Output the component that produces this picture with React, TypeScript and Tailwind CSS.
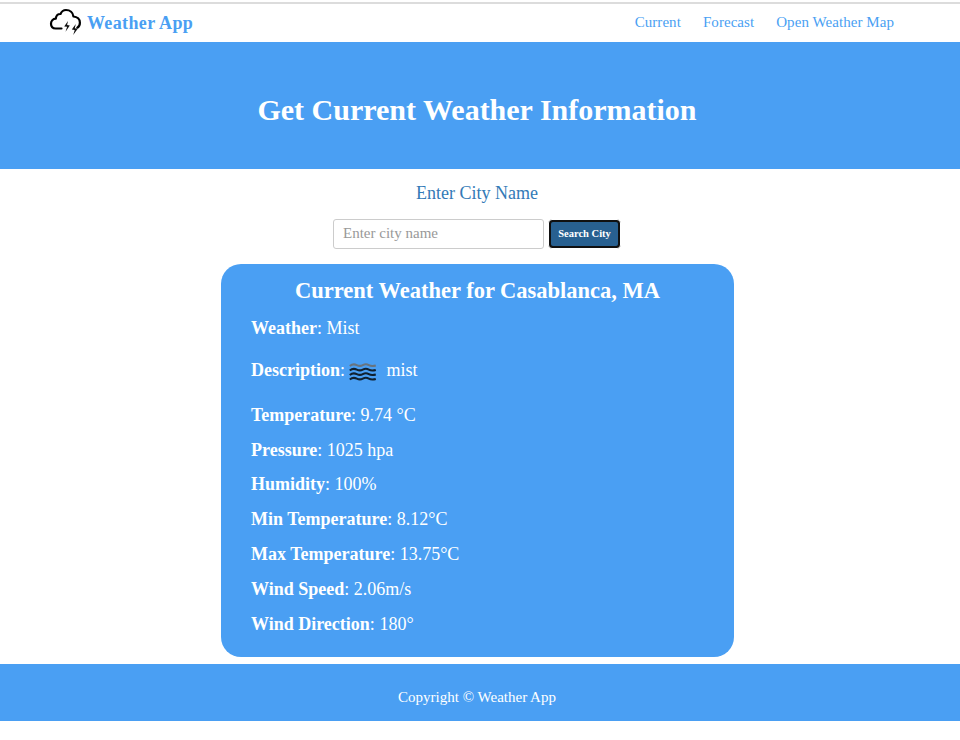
import React from "react";

const readings: [string, string][] = [
  ["Temperature", "9.74 °C"],
  ["Pressure", "1025 hpa"],
  ["Humidity", "100%"],
  ["Min Temperature", "8.12°C"],
  ["Max Temperature", "13.75°C"],
  ["Wind Speed", "2.06m/s"],
  ["Wind Direction", "180°"],
];

function StormCloud() {
  return (
    <svg className="mb-[3px] h-[28px] w-[33px] shrink-0" viewBox="0 0 33 28" fill="none">
      <path
        d="M12.500 20.500H6.800C3.800 20.500 2 18.500 2 15.800c0-2.800 2-4.900 4.800-5.100C7 7.300 9 5.800 11.500 6 12.600 3.300 14.500 2 17 2c4 0 7 2.600 7.400 6.500 3.900.2 6.500 2.700 6.500 6.200 0 2.300-.9 4-2.600 5"
        stroke="#000"
        strokeWidth="2.200"
        strokeLinecap="round"
        strokeLinejoin="round"
      />
      <path d="M19 13 15.200 18.400l2.900.4-1.600 4.900 4.300-6.100-2.700-.5zM26.800 16l-4 5.500 2.900.4-1.500 5.200 4.500-6.400-2.900-.5z" fill="#111" />
    </svg>
  );
}

function MistIcon() {
  return (
    <svg className="h-[18px] w-[28px] shrink-0" viewBox="0 0 28 18" fill="none" strokeWidth="2.100" strokeLinecap="butt">
      <path d="M.8 3C3 1.200 5.500 1 7.800 2.100s3.800 1.200 6 0 4-1.200 6 0 4.300 1.200 7 .4" stroke="#68747f" />
      <path d="M.8 7.500C3 5.700 5.500 5.500 7.800 6.600s3.800 1.200 6 0 4-1.200 6 0 4.300 1.200 7 .4" stroke="#10202f" />
      <path d="M.8 12C3 10.200 5.500 10 7.800 11.100s3.800 1.200 6 0 4-1.200 6 0 4.300 1.200 7 .4" stroke="#10202f" />
      <path d="M.8 16.500C3 14.700 5.500 14.500 7.800 15.600s3.800 1.200 6 0 4-1.200 6 0 4.300 1.200 7 .4" stroke="#10202f" />
    </svg>
  );
}

export default function App() {
  return (
    <div className="h-[740px] w-full overflow-hidden bg-white font-['Liberation_Serif',serif] text-white">
      <header className="mt-[2px] flex h-[40px] items-center justify-between border-t-2 border-[#dcdcdc] pr-[66px] pl-[49px] text-[#4a9ff3]">
        <a className="flex items-center text-[18px] font-bold">
          <StormCloud />
          <span className="mt-[1px] ml-[5px] tracking-[0.360px]">Weather App</span>
        </a>
        <nav className="flex gap-[22px] pb-[2px] text-[15px] tracking-[0.060px]">
          <a>Current</a>
          <a>Forecast</a>
          <a>Open Weather Map</a>
        </nav>
      </header>

      <section className="flex h-[127px] items-center justify-center bg-[#4a9ff3] pt-[9px] pr-[6px]">
        <h1 className="text-[30px] leading-[34px] font-bold">Get Current Weather Information</h1>
      </section>

      <main className="flex h-[495px] flex-col items-center pr-[5px]">
        <label htmlFor="city" className="mt-[11px] h-[26px] pr-[1px] text-[18px] leading-[26px] text-[#337ab7]">
          Enter City Name
        </label>
        <form className="mt-[13px] flex h-[30px] items-center gap-[4px] pr-[1px]">
          <input
            id="city"
            placeholder="Enter city name"
            className="h-[30px] w-[211px] rounded-[3px] border border-[#ccc] px-[9px] pb-[2px] text-[15px] text-[#555] placeholder:text-[#999]"
          />
          <button
            type="button"
            className="h-[30px] w-[73px] rounded-[4px] border border-white bg-[#101010] p-[2px] text-[10.500px] font-bold"
          >
            <span className="flex h-full items-center justify-center rounded-[2px] bg-[#286090]">Search City</span>
          </button>
        </form>

        <article className="mt-[15px] h-[393px] w-[513px] rounded-[20px] bg-[#4a9ff3] px-[30px] pt-[13px] text-[18px]">
          <h2 className="text-center text-[22.500px] leading-[27px] font-bold">Current Weather for Casablanca, MA</h2>
          <p className="mt-[11px] leading-[26px]">
            <b>Weather</b>: Mist
          </p>
          <p className="mt-[16px] flex h-[26px] items-center leading-[26px]">
            <span>
              <b>Description</b>:
            </span>
            <span className="mt-[3px] mr-[10px] ml-[3.500px] flex">
              <MistIcon />
            </span>
            <span>mist</span>
          </p>
          <div className="mt-[14.800px]">
            {readings.map(([name, value]) => (
              <p key={name} className="h-[34.800px] leading-[34.800px]">
                <b>{name}</b>: {value}
              </p>
            ))}
          </div>
        </article>
      </main>

      <footer className="flex h-[57px] items-center justify-center bg-[#4a9ff3] pt-[9px] pr-[6px] text-[15px]">
        Copyright © Weather App
      </footer>
    </div>
  );
}
